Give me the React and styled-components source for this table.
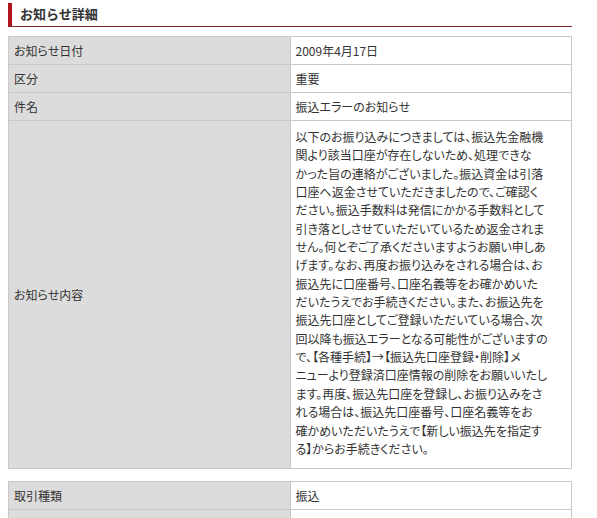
import React from "react";
import styled, { createGlobalStyle } from "styled-components";

const GlobalStyle = createGlobalStyle`
  body {
    margin: 0;
    background: #fff;
    font-family: "Noto Sans CJK JP", "Noto Sans", sans-serif;
    font-size: 12px;
    color: #333;
  }
`;

const Page = styled.div`
  width: 564px;
  padding: 3px 0 0 8px;
`;

const Heading = styled.h2`
  margin: 0 0 9px;
  height: 23px;
  line-height: 21px;
  padding-left: 8px;
  border-left: 4px solid #b3151c;
  border-bottom: 1px solid #7d2626;
  font-size: 13px;
  font-weight: bold;
  color: #333;
`;

const Table = styled.table`
  width: 100%;
  border-collapse: collapse;
  margin-bottom: 12px;
  font-feature-settings: "palt";
`;

const Label = styled.th`
  width: 50%;
  background: #dcdcdc;
  border: 1px solid #c9c9c9;
  padding: 5px 5px 4px;
  line-height: 18px;
  text-align: left;
  font-weight: normal;
  vertical-align: middle;
`;

const Value = styled.td`
  background: #fff;
  border: 1px solid #c9c9c9;
  padding: ${p => (p.$long ? "7px 5px 10px" : "5px 5px 4px")};
  line-height: ${p => (p.$long ? "18.35px" : "18px")};
  vertical-align: top;
`;

const Line = styled.span`
  display: block;
  white-space: nowrap;
`;

const message = [
  "以下のお振り込みにつきましては、振込先金融機",
  "関より該当口座が存在しないため、処理できな",
  "かった旨の連絡がございました。振込資金は引落",
  "口座へ返金させていただきましたので、ご確認く",
  "ださい。振込手数料は発信にかかる手数料として",
  "引き落としさせていただいているため返金されま",
  "せん。何とぞご了承くださいますようお願い申しあ",
  "げます。なお、再度お振り込みをされる場合は、お",
  "振込先に口座番号、口座名義等をお確かめいた",
  "だいたうえでお手続きください。また、お振込先を",
  "振込先口座としてご登録いただいている場合、次",
  "回以降も振込エラーとなる可能性がございますの",
  "で、【各種手続】→【振込先口座登録・削除】メ",
  "ニューより登録済口座情報の削除をお願いいたし",
  "ます。再度、振込先口座を登録し、お振り込みをさ",
  "れる場合は、振込先口座番号、口座名義等をお",
  "確かめいただいたうえで【新しい振込先を指定す",
  "る】からお手続きください。"
];

export default function App() {
  return (
    <Page>
      <GlobalStyle />
      <Heading>お知らせ詳細</Heading>
      <Table>
        <tbody>
          <tr>
            <Label>お知らせ日付</Label>
            <Value>2009年4月17日</Value>
          </tr>
          <tr>
            <Label>区分</Label>
            <Value>重要</Value>
          </tr>
          <tr>
            <Label>件名</Label>
            <Value>振込エラーのお知らせ</Value>
          </tr>
          <tr>
            <Label>お知らせ内容</Label>
            <Value $long>
              {message.map((line, i) => (
                <Line key={i}>{line}</Line>
              ))}
            </Value>
          </tr>
        </tbody>
      </Table>
      <Table>
        <tbody>
          <tr>
            <Label>取引種類</Label>
            <Value>振込</Value>
          </tr>
          <tr>
            <Label>受付番号</Label>
            <Value></Value>
          </tr>
        </tbody>
      </Table>
    </Page>
  );
}
